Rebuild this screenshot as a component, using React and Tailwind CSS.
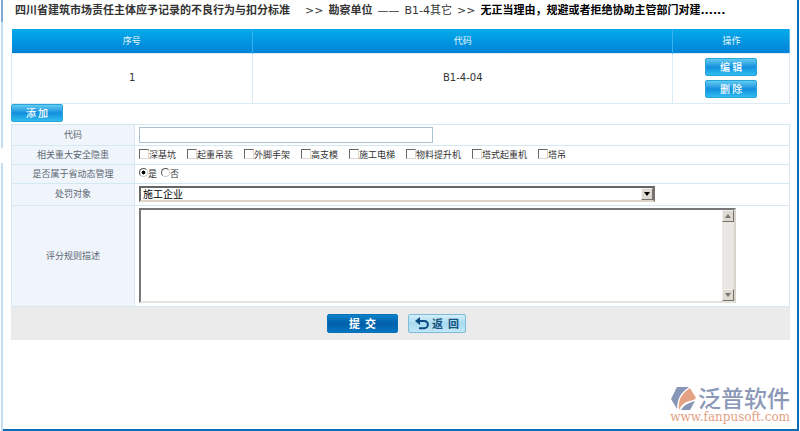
import { useState } from 'react';

const hazards = ['深基坑', '起重吊装', '外脚手架', '高支模', '施工电梯', '物料提升机', '塔式起重机', '塔吊'];

const labelCell = 'border border-[#d3e8f3] bg-[#eff5fb] text-center text-[#5d6773] font-normal p-0';
const fieldCell = 'border border-[#d3e8f3] px-1 py-0';
const headCell = 'h-6 p-0 font-normal border-r border-[#35b2ea] last:border-r-0';

export default function App() {
  const [code, setCode] = useState('');
  const [dynamic, setDynamic] = useState('yes');
  const [rule, setRule] = useState('');

  return (
    <div className="min-h-screen flex pr-px bg-white text-[9px] leading-3 text-[#333] font-['Noto_Sans_CJK_SC',sans-serif]">
      <SideStrip />
      <div className="flex-1 min-w-0 flex flex-col border-r-2 border-b-2 border-[#0b6cb8]">
        <main className="px-[7px] ml-px">
          <Breadcrumb />

          <table className="w-full table-fixed border-collapse">
            <thead>
              <tr className="bg-linear-to-b from-[#06abe9] to-[#0282d8] text-[#e8f6fb]">
                <th className={`${headCell} w-[31%]`}>序号</th>
                <th className={headCell}>代码</th>
                <th className={`${headCell} w-[15%]`}>操作</th>
              </tr>
            </thead>
            <tbody>
              <tr className="text-center">
                <td className="h-[50px] p-0 border border-[#dcebf3] text-[10px] font-['DejaVu_Sans',sans-serif]">1</td>
                <td className="p-0 border border-[#dcebf3] text-[10px] font-['DejaVu_Sans',sans-serif]">B1-4-04</td>
                <td className="p-0 border border-[#dcebf3]">
                  <div className="flex flex-col items-center gap-1">
                    <BlueButton>编 辑</BlueButton>
                    <BlueButton>删 除</BlueButton>
                  </div>
                </td>
              </tr>
            </tbody>
          </table>

          <BlueButton>添 加</BlueButton>

          <form className="mt-[2px]" onSubmit={(e) => e.preventDefault()}>
            <table className="w-full border-collapse">
              <tbody>
                <tr className="h-[21px]">
                  <th className={`${labelCell} w-[123px]`}><label htmlFor="code">代码</label></th>
                  <td className={fieldCell}>
                    <input
                      id="code"
                      type="text"
                      value={code}
                      onChange={(e) => setCode(e.target.value)}
                      className="block w-[294px] max-w-full h-4 px-1 border border-[#a9c3d6] bg-white"
                    />
                  </td>
                </tr>
                <tr className="h-[19px]">
                  <th className={labelCell}>相关重大安全隐患</th>
                  <td className={fieldCell}>
                    <div className="flex gap-[11px]">
                      {hazards.map((name) => (
                        <label key={name} className="flex items-center whitespace-nowrap">
                          <input
                            type="checkbox"
                            className="appearance-none size-[10px] mb-[2px] bg-white border border-t-[#666] border-l-[#666] border-r-[#ddd9d0] border-b-[#ddd9d0] checked:bg-[#444]"
                          />
                          {name}
                        </label>
                      ))}
                    </div>
                  </td>
                </tr>
                <tr className="h-[19px]">
                  <th className={labelCell}>是否属于省动态管理</th>
                  <td className={fieldCell}>
                    <div className="flex gap-1">
                      <DynamicRadio value="yes" text="是" current={dynamic} onPick={setDynamic} />
                      <DynamicRadio value="no" text="否" current={dynamic} onPick={setDynamic} />
                    </div>
                  </td>
                </tr>
                <tr className="h-[22px]">
                  <th className={labelCell}><label htmlFor="target">处罚对象</label></th>
                  <td className={fieldCell}>
                    <div className="relative w-[516px] max-w-full">
                      <select
                        id="target"
                        className="block appearance-none w-full h-4 pl-[2px] text-[10px] leading-3 text-black bg-white border-2 border-t-[#666] border-l-[#666] border-r-[#77736c] border-b-[#ddd5c8]"
                      >
                        <option>施工企业</option>
                        <option>勘察单位</option>
                      </select>
                      <span className="absolute top-[2px] right-[2px] pointer-events-none flex">
                        <ArrowBox color="#000" />
                      </span>
                    </div>
                  </td>
                </tr>
                <tr className="h-[101px]">
                  <th className={labelCell}><label htmlFor="rule">评分规则描述</label></th>
                  <td className={fieldCell}>
                    <div className="flex w-[597px] max-w-full h-[95px] border-2 border-t-[#777] border-l-[#777] border-r-[#d8d4cc] border-b-[#e4e2dc]">
                      <textarea
                        id="rule"
                        value={rule}
                        onChange={(e) => setRule(e.target.value)}
                        className="flex-1 min-w-0 resize-none p-1 text-[10px] outline-none"
                      />
                      <div className="flex flex-col justify-between bg-[#e9e7e3]">
                        <ArrowBox up color="#777" />
                        <ArrowBox color="#777" />
                      </div>
                    </div>
                  </td>
                </tr>
              </tbody>
            </table>

            <div className="h-[33px] pr-2 flex items-center justify-center gap-[10px] bg-[#ebebeb]">
              <button
                type="submit"
                className="w-[71px] h-[19px] rounded-xs border border-[#0a70b8] bg-linear-to-b from-[#0d83cc] via-[#035fa8] to-[#0475c2] text-white text-[11px] leading-4 font-bold whitespace-pre"
              >
                提  交
              </button>
              <button
                type="button"
                className="w-[58px] h-[19px] flex items-center justify-center gap-[3px] rounded-xs border border-[#7dbbd8] bg-linear-to-b from-[#d3effa] via-[#a9daf0] to-[#c3e8f7] text-[#15527f] text-[11px] leading-4 font-bold whitespace-pre"
              >
                <svg viewBox="0 0 14 13" className="w-[14px] h-[13px]" fill="none" stroke="#0b4a80" strokeWidth="2">
                  <path d="M3 4H9.3A3.6 3.6 0 0 1 9.3 11.2H4" />
                  <path d="M0 4L5 0V8Z" fill="#0b4a80" stroke="none" />
                </svg>
                返  回
              </button>
            </div>
          </form>
        </main>
        <Watermark />
      </div>
    </div>
  );
}

function SideStrip() {
  return (
    <div className="w-[3px] flex flex-col pl-px">
      <div className="h-[22px] bg-[#7fa9d6]" />
      <div className="h-[126px] bg-[#c3def3]" />
      <div className="h-[15px]" />
      <div className="flex-1 bg-[#c3def3]" />
    </div>
  );
}

function Breadcrumb() {
  return (
    <nav className="h-[29px] pl-1 pt-[3px] flex items-start gap-[5px] overflow-hidden whitespace-nowrap text-[11px] leading-4 font-['DejaVu_Sans','Noto_Sans_CJK_SC',sans-serif]">
      <span className="w-[285px] font-bold">四川省建筑市场责任主体应予记录的不良行为与扣分标准</span>
      <span>&gt;&gt;</span>
      <span className="font-bold">勘察单位</span>
      <span>——</span>
      <span>B1-4其它</span>
      <span>&gt;&gt;</span>
      <span className="font-bold text-black">无正当理由，规避或者拒绝协助主管部门对建......</span>
    </nav>
  );
}

function BlueButton({ children }) {
  return (
    <button
      type="button"
      className="block w-[52px] h-[18px] rounded-xs border border-[#2aa3d8] bg-linear-to-b from-[#5fcdf2] via-[#128fdc] to-[#2fbdf0] text-white text-[10px] leading-4 font-medium whitespace-pre"
    >
      {children}
    </button>
  );
}

function DynamicRadio({ value, text, current, onPick }) {
  return (
    <label className="flex items-center">
      <input
        type="radio"
        name="dynamic"
        value={value}
        checked={current === value}
        onChange={() => onPick(value)}
        className="appearance-none size-[9px] mb-[3px] rounded-full border border-t-[#555] border-l-[#555] border-r-[#ccc] border-b-[#ccc] bg-white checked:bg-[radial-gradient(#000_35%,#fff_45%)]"
      />
      {text}
    </label>
  );
}

function ArrowBox({ up, color }) {
  return (
    <span className="w-3 h-3 flex items-center justify-center bg-[#dedad2] border border-t-[#f2f0ec] border-l-[#f2f0ec] border-r-[#77736c] border-b-[#77736c]">
      <svg viewBox="0 0 6 4" className="w-[6px] h-[4px]" fill={color}>
        <path d={up ? 'M0 4L3 0L6 4Z' : 'M0 0H6L3 4Z'} />
      </svg>
    </span>
  );
}

function Watermark() {
  return (
    <div className="mt-auto self-end pr-[7px] pb-[6px] flex flex-col items-end">
      <div className="flex items-center gap-px">
        <svg viewBox="0 0 26 24" className="w-[26px] h-6">
          <path d="M6 0H18Q9 6 7 14Q6 18 6 22L0 12Z" fill="#8796b6" />
          <path d="M19 1L25 11Q24 13 18 14Q11 16 8 23Q6 9 19 1Z" fill="#e5a184" />
          <path d="M10 23Q13 17 24 14L19 23Z" fill="#8796b6" />
        </svg>
        <span className="mb-1 text-[23px] leading-5 font-medium text-[#8c98b8]">泛普软件</span>
      </div>
      <span className="text-[12px] leading-3 text-[#e5a184] font-['DejaVu_Serif',serif]">www.fanpusoft.com</span>
    </div>
  );
}
